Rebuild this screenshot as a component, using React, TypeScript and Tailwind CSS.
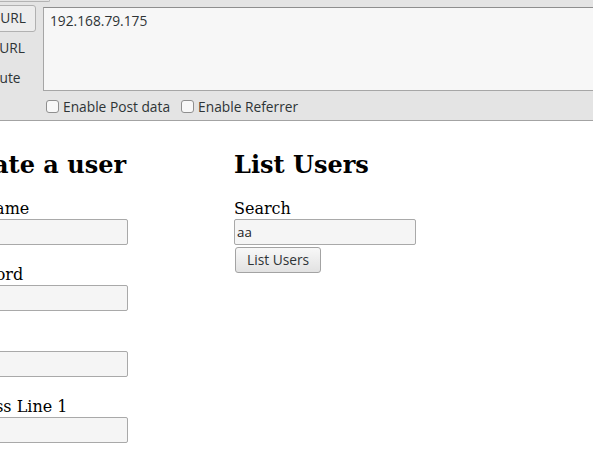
const sans = { fontFamily: '"Open Sans", "Noto Sans", sans-serif' };

function Checkbox({ label }: { label: string }) {
  return (
    <label className="flex items-center gap-[4px]">
      <span className="block h-[13px] w-[13px] rounded-[3px] border border-[#8f8f8f] bg-[#f8f8f8]" />
      <span>{label}</span>
    </label>
  );
}

function HackBar() {
  return (
    <div
      className="h-[121px] border-b border-[#a3a3a3] bg-[#e4e4e4] text-[13.75px] text-[#2e3436]"
      style={sans}
    >
      <div className="h-[2px] w-[50px] rounded-br-[2px] border-b border-r border-[#b3b3b3]" />
      <div className="flex pt-[3px]">
        <div className="w-[43px] shrink-0 overflow-hidden">
          <div className="-ml-[45px] flex w-[81px] flex-col items-center gap-[3px]">
            <div className="flex h-[27px] w-full items-center justify-center rounded-[3px] border border-[#b1b1b1] bg-[#ededed]">
              Load URL
            </div>
            <div className="flex h-[27px] items-center pl-[2px]">Split URL</div>
            <div className="flex h-[27px] items-center">Execute</div>
          </div>
        </div>
        <div className="flex-1">
          <div className="-mr-[10px] mt-[2px] h-[84px] border border-[#a6a6a6] border-t-[#8e8e8e] bg-[#f7f7f7] px-[6px] pt-[3px] leading-[19px]">
            192.168.79.175
          </div>
          <div className="mt-[6px] flex items-center gap-[11px] pl-[3px] leading-[19px]">
            <Checkbox label="Enable Post data" />
            <Checkbox label="Enable Referrer" />
          </div>
        </div>
      </div>
    </div>
  );
}

function Field({ label, value = '' }: { label: string; value?: string }) {
  return (
    <div>
      <div className="h-[20px] whitespace-nowrap leading-[19px]">{label}</div>
      <div
        className="h-[26px] w-[182px] rounded-[2px] border border-[#a9a9a9] bg-[#f5f5f5] px-[2px] text-[13.33px] leading-[24px] text-[#222]"
        style={sans}
      >
        {value}
      </div>
    </div>
  );
}

export default function App() {
  return (
    <div className="h-[449px] w-[593px] overflow-hidden bg-white">
      <HackBar />
      <div
        className="flex pt-[30px] text-[16px] text-black"
        style={{ fontFamily: '"DejaVu Serif", serif' }}
      >
        <div className="-ml-[54px] w-[288px] shrink-0">
          <h2 className="h-[28px] whitespace-nowrap text-[24px] font-bold leading-[28px]">Create a user</h2>
          <div className="mt-[20px] flex flex-col gap-[20px]">
            <Field label="Username" />
            <Field label="Password" />
            <Field label="Email" />
            <Field label="Address Line 1" />
            <Field label="Address Line 2" />
          </div>
        </div>
        <div className="shrink-0">
          <h2 className="h-[28px] whitespace-nowrap text-[24px] font-bold leading-[28px]">List Users</h2>
          <div className="mt-[20px]">
            <Field label="Search" value="aa" />
            <button
              className="ml-[1px] mt-[2px] h-[26px] rounded-[3px] border border-[#a3a3a3] bg-gradient-to-b from-[#f8f8f8] to-[#e2e2e2] px-[11px] text-[13.75px] leading-[22px] text-[#2e3436]"
              style={sans}
              type="button"
            >
              List Users
            </button>
          </div>
        </div>
      </div>
    </div>
  );
}
